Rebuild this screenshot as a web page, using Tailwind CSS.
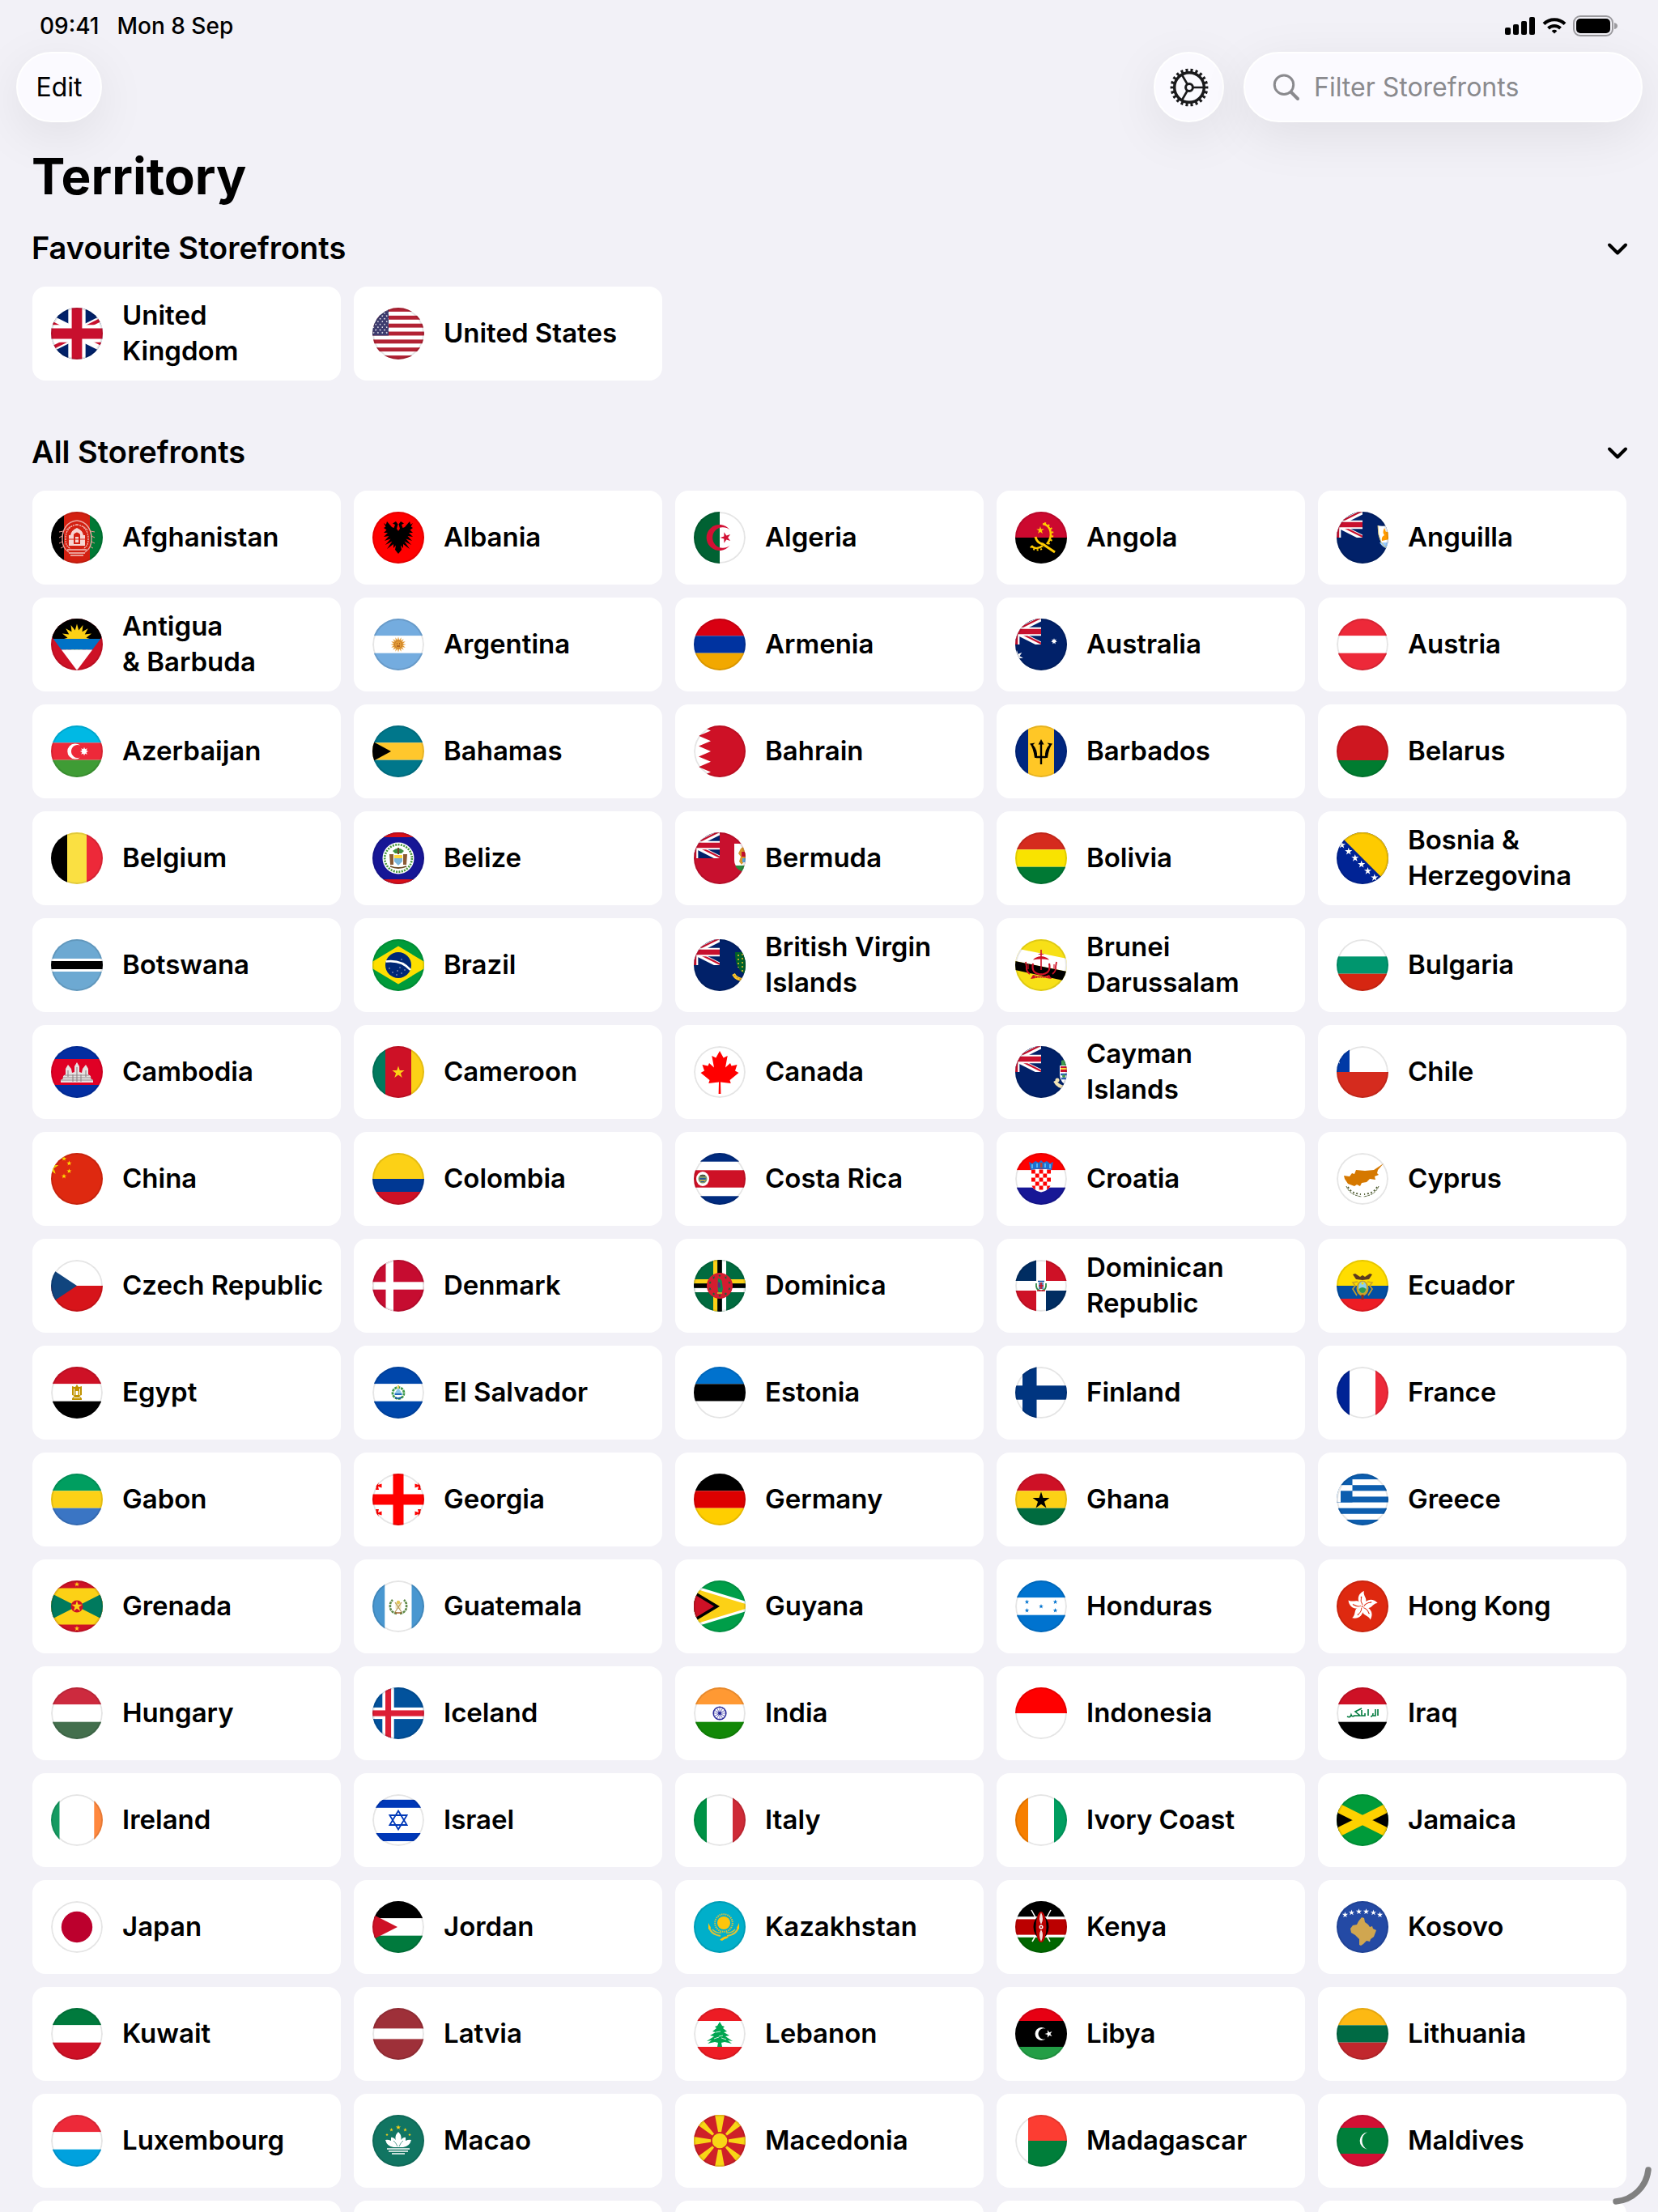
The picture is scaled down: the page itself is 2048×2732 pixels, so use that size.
<!DOCTYPE html>
<html lang="en">
<head>
<meta charset="utf-8">
<meta name="viewport" content="width=device-width, initial-scale=1">
<title>Territory</title>
<script src="https://cdn.jsdelivr.net/npm/@tailwindcss/browser@4"></script>
</head>
<body class="relative h-screen overflow-hidden bg-[#f2f1f7] font-['Inter','Liberation_Sans',sans-serif] text-black">

<!-- Status bar -->
<div class="flex h-16 items-center justify-between pr-[50px] pl-[49px] text-[28px] font-medium">
  <div class="flex gap-[22px]"><time>09:41</time><span>Mon 8 Sep</span></div>
  <div class="flex items-center gap-2">
    <svg class="h-6 w-[38px]" viewBox="0 0 38 24" aria-label="Signal"><rect y="14" width="7" height="9" rx="2"/><rect x="10" y="10" width="7" height="13" rx="2"/><rect x="20" y="6" width="7" height="17" rx="2"/><rect x="30" y="1" width="7" height="22" rx="2"/></svg>
    <svg class="h-6 w-[30px]" viewBox="0 0 30 24" fill="none" stroke="#000" stroke-width="4" aria-label="Wi-Fi"><path d="M2 9.500a18.500 18.500 0 0 1 26 0M7.500 15a10.800 10.800 0 0 1 15 0"/><path d="M15 21.500l-3.300-3.300a4.700 4.700 0 0 1 6.600 0z" fill="#000" stroke="none"/></svg>
    <svg class="h-[26px] w-[55px]" viewBox="0 0 55 26" aria-label="Battery"><rect x="1" y="1" width="48" height="24" rx="8" fill="none" stroke="#9b9a9e" stroke-width="2"/><rect x="4" y="4" width="42" height="18" rx="5"/><path d="M51 9q4 1 4 4t-4 4z" fill="#9b9a9e"/></svg>
  </div>
</div>

<!-- Toolbar -->
<header class="flex items-center gap-6 pr-[19px] pl-5">
  <button type="button" class="h-[87px] w-[106px] rounded-full border-2 border-white bg-[#fbfaff] text-[32px] shadow-[0_16px_64px_rgba(0,0,0,0.08)]">Edit</button>
  <button type="button" aria-label="Settings" class="ml-auto grid size-[87px] place-items-center rounded-full border-2 border-white bg-[#fbfaff] shadow-[0_16px_64px_rgba(0,0,0,0.08)]">
    <svg class="size-12" viewBox="0 0 48 48" fill="none" stroke="#1a1a1c" stroke-width="3">
      <circle cx="24" cy="24" r="18.300" stroke-width="3.500"/>
      <circle cx="24" cy="24" r="21.200" stroke-width="4.400" pathLength="44" stroke-dasharray="1 1" stroke-dashoffset=".5"/>
      <circle cx="24" cy="24" r="4.400"/>
      <path d="M28.500 24H42M21.700 20 15 8.500M21.700 28 15 39.500" stroke-width="2.600"/>
    </svg>
  </button>
  <label class="flex h-[87px] w-[493px] items-center gap-4 rounded-full border-2 border-white bg-[#fbfaff] px-[33px] shadow-[0_16px_64px_rgba(0,0,0,0.08)]">
    <svg class="size-9 shrink-0" viewBox="0 0 36 36" fill="none" stroke="#8a8a8e" stroke-linecap="round" aria-hidden="true"><circle cx="15" cy="14.700" r="11.700" stroke-width="3"/><path d="M24 24l8 8" stroke-width="4"/></svg>
    <input type="text" aria-label="Filter Storefronts" placeholder="Filter Storefronts" class="min-w-0 flex-1 bg-transparent text-[32px] outline-none placeholder:text-[#8a8a8e]">
  </label>
</header>

<main>
  <h1 class="mt-[31px] mb-7 pl-[39px] text-[62px] leading-[72px] font-bold">Territory</h1>

  <section class="mb-16">
    <h2 class="mb-6"><button type="button" aria-expanded="true" class="flex h-12 w-full items-center justify-between pr-9 pl-[39px] text-[38px] leading-[48px] font-semibold">Favourite Storefronts
      <svg class="size-7" viewBox="0 0 28 28" fill="none" stroke="#000" stroke-width="4" stroke-linecap="round" stroke-linejoin="round" aria-hidden="true"><path d="M4 10.500l10 10 10-10"/></svg></button></h2>
    <div id="favourites" class="grid grid-cols-5 gap-4 pr-[39px] pl-10"></div>
  </section>

  <section>
    <h2 class="mb-6"><button type="button" aria-expanded="true" class="flex h-12 w-full items-center justify-between pr-9 pl-[39px] text-[38px] leading-[48px] font-semibold">All Storefronts
      <svg class="size-7" viewBox="0 0 28 28" fill="none" stroke="#000" stroke-width="4" stroke-linecap="round" stroke-linejoin="round" aria-hidden="true"><path d="M4 10.500l10 10 10-10"/></svg></button></h2>
    <div id="storefronts" class="grid grid-cols-5 gap-4 pr-[39px] pl-10"></div>
  </section>
</main>

<!-- Window resize handle -->
<svg class="absolute right-0 bottom-0 size-14" viewBox="0 0 56 56" fill="none" stroke="#808080" stroke-width="7.500" stroke-linecap="round" aria-hidden="true"><path d="M4 43A44 44 0 0 0 44 4"/></svg>

<!-- Shared clip for the red saltire of the Union flag -->
<svg width="0" height="0" class="absolute" aria-hidden="true"><clipPath id="saltire"><path d="M30 15h30v15zv15H0zH0V0zV0h30z"/></clipPath></svg>

<script>
// Drawing helpers: every flag lives in a 64 x 64 box.
const R = (x, y, w, h, f) => `<rect x="${x}" y="${y}" width="${w}" height="${h}" fill="${f}"/>`;
const C = (x, y, r, f) => `<circle cx="${x}" cy="${y}" r="${r}" fill="${f}"/>`;
const P = (d, f) => `<path d="${d}" fill="${f}"/>`;
const L = (d, s, w, x = '') => `<path d="${d}" fill="none" stroke="${s}" stroke-width="${w}" ${x}/>`;
const O = (x, y, r, s, w, x2 = '') => `<circle cx="${x}" cy="${y}" r="${r}" fill="none" stroke="${s}" stroke-width="${w}" ${x2}/>`;
const H = (a, b, c, t = 21.33) => R(0, 0, 64, t, a) + R(0, t, 64, 64 - 2 * t, b) + R(0, 64 - t, 64, t, c);
const V = (a, b, c, t = 16) => R(0, 0, t, 64, a) + R(t, 0, 64 - 2 * t, 64, b) + R(64 - t, 0, t, 64, c);
const S = (x, y, r, f, n = 5, k = 0.382, rot = 0) => {
  let d = '';
  for (let i = 0; i < 2 * n; i++) {
    const a = (i * Math.PI) / n - Math.PI / 2 + (rot * Math.PI) / 180, q = i % 2 ? r * k : r;
    d += (i ? 'L' : 'M') + (x + q * Math.cos(a)).toFixed(2) + ' ' + (y + q * Math.sin(a)).toFixed(2);
  }
  return P(d + 'Z', f);
};
const moon = (x, y, h, o, i, f) => P(`M${x} ${y - h}A${o} ${o} 0 1 0 ${x} ${y + h}A${i} ${i} 0 1 1 ${x} ${y - h}Z`, f);
const mirror = s => s + `<g transform="translate(64) scale(-1 1)">${s}</g>`;
const spin = (s, n) => Array.from({ length: n }, (_, i) => `<g transform="rotate(${(360 / n) * i} 32 32)">${s}</g>`).join('');
const UK = (x, y, w, h) => `<svg x="${x}" y="${y}" width="${w}" height="${h}" viewBox="0 0 60 30">` + R(0, 0, 60, 30, '#012169')
  + L('M0 0l60 30M60 0L0 30', '#fff', 6) + L('M0 0l60 30M60 0L0 30', '#c8102e', 4, 'clip-path="url(#saltire)"')
  + L('M30 0v30M0 15h60', '#fff', 10) + L('M30 0v30M0 15h60', '#c8102e', 6) + '</svg>';
const ensign = (bg, x) => R(0, 0, 64, 64, bg) + UK(-32, 0, 64, 32) + x;

const usStars = () => {
  let s = '';
  for (let r = 0; r < 9; r++) for (let c = 0; c < 4; c++) s += S(1.5 + c * 5.4 + (r % 2 ? 2.7 : 0), 3.4 + r * 3.45, 1.4, '#fff');
  return s;
};
const checks = () => {
  let s = '';
  for (let r = 0; r < 5; r++) for (let c = 0; c < 5; c++) if ((r + c) % 2 === 0) s += R(20 + c * 4.8, 20.5 + r * 5, 4.8, 5, '#f00');
  return s;
};

const favourites = [
  ['United\nKingdom', UK(-32, 0, 128, 64)],
  ['United States', R(0, 0, 64, 64, '#fff') + [0, 1, 2, 3, 4, 5, 6].map(i => R(0, i * 9.846, 64, 4.923, '#b22234')).join('') + `<svg width="20" height="34.500">${R(0, 0, 20, 35, '#3c3b6e')}${usStars()}</svg>`],
];

const storefronts = [
  ['Afghanistan', V('#000', '#d32011', '#007a36') + mirror(L('M32 11C44 12 50 22 50 33S46 47 42 50', '#eda9a2', 1.4) + L('M32 16C41 17 46 24 46 33S44 42 40 46', '#f3c4bf', 1.3, 'stroke-dasharray="2 1"') + L('M49 24l5 1M50 30l4 2M50 37l4 2M48 43l4 2M24 18l-6 5', '#e79b93', 1) + P('M32 20q7 3 8 9h2v13H32z', '#f6d5d1') + L('M22 51h10M24 54h8M20 47h12', '#f3c4bf', 1.6)) + P('M28 28q4-5 8 0v12h-8z', '#d32011') + R(30, 31, 4, 7, '#f6d5d1') + L('M22 34h20', '#d32011', 1)],
  ['Albania', R(0, 0, 64, 64, '#f00') + mirror(P('M31.900 24L34 21 32.500 15.500 35 12 39 14.500 36 16 37.500 20 40 19 46 12 47.200 16 50 14 47.500 18.500 50 20 46.500 22.500 50 26 45 26 50 31 43.500 30 49 36 41.500 33.500 48 41 39.500 36.500 46 46 38 40 38 45 35 41.500 36 47 32 52z', '#000'))],
  ['Algeria', R(0, 0, 32, 64, '#006233') + R(32, 0, 32, 64, '#fff') + moon(44.5, 32, 9.5, 16, 12.8, '#d21034') + S(39.5, 32, 7, '#d21034', 5, 0.382, -90)],
  ['Angola', R(0, 0, 64, 32, '#cc092f') + R(0, 32, 64, 32, '#000') + S(31, 23, 5, '#ffcb00') + L('M34 15C45 17 47 31 39 40', '#ffcb00', 2.6) + L('M36 14C48 18 49 32 41 40', '#ffcb00', 2.5, 'stroke-dasharray="2 3"') + L('M20 42c4 5 10 3 14 0', '#ffcb00', 2.6) + L('M19 43c3 5 12 6 16 1', '#ffcb00', 2, 'stroke-dasharray="2 2.500"') + L('M25 31q2 8 9 9l15 10', '#ffcb00', 3)],
  ['Anguilla', ensign('#012169', P('M51 17q6 2 15-1v31Q51 42 51 17z', '#fff') + P('M53 38h13v9q-9-2-13-9z', '#9cf') + P('M59 20l2 5 4-1v10l-9 2q-1-5 3-7-3-3 0-9z', '#ff9a00') + L('M51 17q0 25 15 30', '#d9c878', 1))],

  ['Antigua\n& Barbuda', R(0, 0, 64, 64, '#ce1126') + P('M-16 0h96L61.200 25H2.800z', '#000') + S(32, 26, 19.5, '#fcd116', 16, 0.6) + P('M2.800 25h58.400l-10.100 13.500H12.900z', '#0072c6') + P('M12.900 38.500h38.200L32 64z', '#fff')],
  ['Argentina', H('#74acdf', '#fff', '#74acdf') + S(32, 32, 9.5, '#e39a35', 16, 0.6) + O(32, 32, 4.5, '#c5812c', 1.2) + L('M30 31h1M33 31h1M30 34h4', '#85340a', 1)],
  ['Armenia', H('#d90012', '#0033a0', '#f2a800')],
  ['Australia', ensign('#012169', S(48, 28, 3.8, '#fff', 7, 0.5) + S(2, 47, 8, '#fff', 7, 0.45))],
  ['Austria', H('#ed2939', '#fff', '#ed2939')],

  ['Azerbaijan', H('#00b9e4', '#ed2939', '#3f9c35') + moon(36, 32, 7.4, 9.6, 8, '#fff') + S(41, 32, 5.2, '#fff', 8, 0.55)],
  ['Bahamas', H('#00778b', '#ffc72c', '#00778b') + P('M-2 18.500L23 32-2 45.500z', '#000')],
  ['Bahrain', R(0, 0, 64, 64, '#fff') + P('M6 0l15 6.400L6 12.800l15 6.400L6 25.600 21 32 6 38.400l15 6.400L6 51.200l15 6.400L6 64h58V0z', '#ce1126')],
  ['Barbados', V('#00267f', '#ffc726', '#00267f') + P('M32 17l3.500 6.500h-7z', '#000') + L('M32 20v28M26 39h12', '#000', 2.4) + mirror(P('M39.500 21.500L46 22.500q-4 4-6 17.500h-3q-1-10 5-16z', '#000'))],
  ['Belarus', R(0, 0, 64, 43, '#ce1720') + R(0, 43, 64, 21, '#007c30')],

  ['Belgium', V('#000', '#fae042', '#ed2939', 20)],
  ['Belize', R(0, 0, 64, 64, '#171696') + R(0, 0, 64, 6, '#d90f19') + R(0, 58, 64, 6, '#d90f19') + C(32, 32, 19.5, '#fff') + O(32, 32, 16.8, '#4a9a3a', 2.6, 'stroke-dasharray="2 1.400"') + P('M25 23q7-7 14 0l-3 3h-8z', '#3f8f3f') + P('M21 27h5v13h-4zM38 27h5l-1 13h-4z', '#8a5a34') + P('M27 28h10v8l-5 5-5-5z', '#7ab6dc') + P('M27 28h10v4H27z', '#ffd83c') + L('M22 42q10 4 20 0', '#6b4a25', 1.8) + R(31, 19, 2, 8, '#6b4a25')],
  ['Bermuda', ensign('#c8102e', P('M50 14h16v36q-16-4-16-16z', '#fff') + P('M51 41h15v9q-12-2-15-9z', '#2b8a3e') + P('M58 20l3-2 3 4v12l-5 6-3-4 2-6-3-4z', '#d9962b') + R(59, 24, 5, 6, '#c8102e') + R(60, 32, 4, 5, '#5aa3d8'))],
  ['Bolivia', H('#d52b1e', '#f9e300', '#007934')],
  ['Bosnia &\nHerzegovina', R(0, 0, 64, 64, '#002395') + P('M0 0h64v64z', '#fecb00') + [[6.5, 15.7], [14.8, 23.6], [22.8, 31.8], [30.7, 39.6], [38.5, 47.8], [46.8, 56]].map(p => S(p[0], p[1], 4.8, '#fff')).join('')],

  ['Botswana', R(0, 0, 64, 64, '#6da9d2') + R(0, 24, 64, 16, '#fff') + R(0, 27, 64, 10, '#000')],
  ['Brazil', R(0, 0, 64, 64, '#009b3a') + P('M-7 32L32 8.500 71 32 32 55.500z', '#fedf00') + C(32, 32, 16, '#002776') + L('M16.500 27.500Q36 25 47 38', '#fff', 2.6) + [[21, 36], [25, 41], [31, 39], [36, 42], [30, 44], [40, 38], [34, 35], [36, 25]].map(p => C(p[0], p[1], 0.7, '#cdd6ea')).join('')],
  ['British Virgin\nIslands', ensign('#012169', P('M51 16h15v28Q51 40 51 16z', '#006129') + L('M55 19v16M60 18v22', '#ffc72c', 1.4, 'stroke-dasharray="2 3"') + L('M49 43q4 8 16 7', '#ffc72c', 4) + L('M50 44q4 6 14 6', '#a8741a', 1, 'stroke-dasharray="2 2"'))],
  ['Brunei\nDarussalam', R(0, 0, 64, 64, '#f7e017') + P('M0 11l64 13v16L0 27z', '#fff') + P('M0 27l64 13v12L0 38z', '#000') + L('M32 13v25', '#cf1126', 1.6) + P('M22 25.500q3-4 10-4.500 7 .5 10 4.500-10-2-20 0z', '#cf1126') + P('M28 19q4-3 8 0z', '#cf1126') + mirror(L('M42 30Q45 43 31 43.500', '#cf1126', 2.2) + L('M51 28l-1 6q1 5-4 9', '#cf1126', 1.8) + L('M48 31v6', '#cf1126', 1.2)) + P('M22 44q10 4 20 0l3 5q-13-3-26 0z', '#cf1126') + L('M24 46.500q8 2 16 0', '#f7e017', 0.8, 'stroke-dasharray="2 1"')],
  ['Bulgaria', H('#fff', '#00966e', '#d62612')],

  ['Cambodia', H('#032ea1', '#e00025', '#032ea1', 16) + P('M32 20l3 5v7l3 1 1-5 4-5 3 5v7l3 2v3l3 2v3H12v-3l3-2v-3l3-2v-7l3-5 4 5 1 5 3-1v-7z', '#e6e2e2') + L('M17 36h30M14 39h36M12 42h40', '#8c8284', 0.9) + L('M32 26v18M21 30v8M43 30v8M27 35v9M37 35v9', '#8c8284', 1.1)],
  ['Cameroon', V('#007a5e', '#ce1126', '#fcd116') + S(32, 32.5, 8, '#fcd116')],
  ['Canada', R(0, 0, 64, 64, '#fff') + P('M32 6l-4.700 8.500-5-2.500L25 26.500 19 21l-1.500 3.500-7-1.500 2.500 7.500L8.500 33l11 9-1.200 4L31 44.500 30.600 59h2.800L33 44.500 45.700 46l-1.200-4 11-9-4.500-2.500 2.500-7.500-7 1.500L45 21l-6 5.500L41.700 12l-5 2.500z', '#f00')],
  ['Cayman\nIslands', ensign('#012169', P('M57 18l6-2v10h-6z', '#3f9c4f') + P('M55 24h11v26q-10-4-11-14z', '#fff') + P('M56 25h9v7h-9z', '#c8102e') + L('M56 28h9', '#ffd83c', 2) + L('M56 35h9M57 40h8', '#2f5fb8', 2.4) + C(60, 37, 2, '#3f9c4f') + L('M49 43q4 8 14 8', '#f2e3b5', 4) + C(52, 42, 2.5, '#f2e3b5'))],
  ['Chile', R(0, 0, 64, 32, '#fff') + R(0, 0, 16, 32, '#0039a6') + R(0, 32, 64, 32, '#d52b1e') + S(0, 16, 7, '#fff')],

  ['China', R(0, 0, 64, 64, '#de2910') + S(0, 18, 9.6, '#ffde00') + [[16, 7], [22.4, 12.8], [22.4, 22.4], [16, 28.8]].map(p => S(p[0], p[1], 3.2, '#ffde00')).join('')],
  ['Colombia', R(0, 0, 64, 32, '#fcd116') + R(0, 32, 64, 16, '#003893') + R(0, 48, 64, 16, '#ce1126')],
  ['Costa Rica', R(0, 0, 64, 64, '#fff') + R(0, 0, 64, 10.7, '#002b7f') + R(0, 53.3, 64, 10.7, '#002b7f') + R(0, 21.3, 64, 21.4, '#ce1126') + '<ellipse cx="11" cy="32" rx="8" ry="9" fill="#fff"/>' + C(11, 32, 5.5, '#7d9a6a') + P('M7 31h8l-2 5H9z', '#24599b') + L('M8 28h6', '#3f3f3f', 1.4) + R(8, 33, 6, 1.6, '#e0b83a')],
  ['Croatia', H('#f00', '#fff', '#171796') + `<svg width="64" height="64"><clipPath id="hr"><path d="M20 20h24v17q0 9-12 11.500Q20 46 20 37z"/></clipPath><g clip-path="url(#hr)">${R(20, 20, 24, 30, '#fff')}${checks()}</g></svg>` + P('M17 11l4 2 4-3 4 2 3-3 3 3 4-2 4 3 4-2-2 10q-13-3-26 0z', '#1f6fd0') + L('M21 14v5M27 13v5M37 13v5M43 14v5', '#56b4f0', 2) + R(31, 12, 2.5, 6, '#c8402c')],
  ['Cyprus', R(0, 0, 64, 64, '#fff') + P('M58 13l-7 8-1 4 2 2-5 2 1 4-7-1-4 4-6 1-2 4-4-2-3 2-8-3-4-6-1-4 7 1 3-4 3 1 2-5 11 1 11-1z', '#d57800') + mirror(L('M52 41q-4 11-19 13', '#4e5b31', 1, 'stroke-dasharray="3 1"') + L('M50 42q-4 8-16 9', '#4e5b31', 1.8, 'stroke-dasharray="2 2.500"'))],

  ['Czech Republic', R(0, 0, 64, 32, '#fff') + R(0, 32, 64, 32, '#d7141a') + P('M-16 0l48 32-48 32z', '#11457e')],
  ['Denmark', R(0, 0, 64, 64, '#c60c30') + R(16.5, 0, 9.5, 64, '#fff') + R(0, 27.3, 64, 9.4, '#fff')],
  ['Dominica', R(0, 0, 64, 64, '#006b3f') + R(24, 0, 5.3, 64, '#fcd116') + R(34.7, 0, 5.3, 64, '#fff') + R(0, 24, 64, 5.3, '#fcd116') + R(0, 34.7, 64, 5.3, '#fff') + R(29.3, 0, 5.4, 64, '#000') + R(0, 29.3, 64, 5.4, '#000') + C(32, 32, 16, '#d41c30') + spin(S(32, 19.5, 2, '#006b3f'), 10) + P('M30 23q5 0 5 6l1 7-2 6-4-3q-1-9 0-16z', '#108c4f') + P('M30 27l3 2v6l-3-1z', '#5b2d82') + R(29, 40, 6, 2, '#c9a227')],
  ['Dominican\nRepublic', R(0, 0, 64, 64, '#fff') + R(0, 0, 26, 26, '#002d62') + R(38, 0, 26, 26, '#ce1126') + R(0, 38, 26, 26, '#ce1126') + R(38, 38, 26, 26, '#002d62') + mirror(L('M33 38q6-1 5-9', '#2c8745', 1.8)) + R(29, 28, 6, 8, '#5b7fae') + L('M29 32h6M32 28v8', '#ce1126', 1.6) + L('M27 38h10', '#ce1126', 1.6) + L('M28 26.500h8', '#0a4b9c', 1.4)],
  ['Ecuador', R(0, 0, 64, 32, '#ffdd00') + R(0, 32, 64, 16, '#034ea2') + R(0, 48, 64, 16, '#ed1c24') + mirror(P('M32 19l3 2 6-4 3 1-4 6-8 1z', '#5c3a1e') + L('M38 27l6 1-3 4 3 4-5 8', '#c9a227', 1.6)) + '<ellipse cx="32" cy="35" rx="7.500" ry="9.500" fill="#c9a227"/><ellipse cx="32" cy="34" rx="5" ry="7" fill="#8bd0ec"/>' + P('M27.500 36q4.500-4 9 0-1 5-4.500 5t-4.500-5z', '#2f9a4f') + C(32, 29, 1.5, '#ffdd00') + R(30.5, 43, 3, 6, '#8c2f22')],

  ['Egypt', H('#ce1126', '#fff', '#000') + P('M32 22l2 3h1l3-1v11l-3 1 3 3v2h-12v-2l3-3-3-1V24l3 1h1z', '#c09300') + P('M30.500 30h3v5h-3z', '#fff') + L('M28.500 27v8M35.500 27v8M28 38.500h8', '#fff', 0.9)],
  ['El Salvador', H('#0047ab', '#fff', '#0047ab') + O(32, 32.5, 7, '#3f9a4a', 2.8, 'stroke-dasharray="3 1"') + P('M32 26l6 9h-12z', '#8fc6e8') + L('M28 34h8', '#0047ab', 1.6) + L('M28 38q4 2 8 0', '#0047ab', 1.6) + R(31, 23, 2, 4, '#e6c84a')],
  ['Estonia', H('#0072ce', '#000', '#fff')],
  ['Finland', R(0, 0, 64, 64, '#fff') + R(9, 0, 17.5, 64, '#003580') + R(0, 23.3, 64, 17.4, '#003580')],
  ['France', V('#002395', '#fff', '#ed2939')],

  ['Gabon', H('#009e60', '#fcd116', '#3a75c4')],
  ['Georgia', R(0, 0, 64, 64, '#fff') + R(25.5, 0, 13, 64, '#f00') + R(0, 25.5, 64, 13, '#f00') + mirror([15, 49].map(y => P(`M4 ${y - 5}h4l-1 4 4.500-1.500v5l-4.500-1.500 1 4H4l1-4-4 1v-4l4 1z`, '#f00')).join(''))],
  ['Germany', H('#000', '#dd0000', '#ffce00')],
  ['Ghana', H('#ce1126', '#fcd116', '#006b3f') + S(32, 33.5, 11, '#000')],
  ['Greece', R(0, 0, 64, 64, '#fff') + [0, 1, 2, 3, 4].map(i => R(0, i * 14.22, 64, 7.11, '#0d5eaf')).join('') + R(0, 0, 19.5, 35.5, '#0d5eaf') + R(0, 14.2, 19.5, 7.1, '#fff') + R(-2, 0, 7, 35.5, '#fff')],

  ['Grenada', R(0, 0, 64, 64, '#ce1126') + R(0, 9.5, 64, 45, '#fcd116') + P('M-12 9.500L32 32-12 54.500zM76 9.500L32 32l44 22.500z', '#007a5e') + C(32, 32, 7.5, '#ce1126') + S(32, 32, 7, '#fcd116') + S(32, 4.8, 3.4, '#fcd116') + S(32, 59.4, 3.4, '#fcd116')],
  ['Guatemala', V('#4997d0', '#fff', '#4997d0', 15.5) + mirror(L('M34 41q9-2 8-11 0-3-3-6', '#5f8a48', 2.6, 'stroke-dasharray="3 1"')) + R(28.5, 27, 7, 8, '#f1e7c4') + L('M28 39l8-12M36 39l-8-12', '#b79a5a', 1.2) + C(32, 27, 2.2, '#e5c75a') + L('M28 40h8', '#a5602f', 1.4)],
  ['Guyana', R(0, 0, 64, 64, '#009e49') + P('M-21 0L85 32-21 64z', '#fff') + P('M-21 3.500L74 32-21 60.500z', '#fcd116') + P('M-21 0l53 32-53 32z', '#000') + P('M-21 4l46 28-46 28z', '#ce1126')],
  ['Honduras', H('#0073cf', '#fff', '#0073cf') + [[14.5, 26.5], [14.5, 37], [32, 32], [49.5, 26.5], [49.5, 37]].map(p => S(p[0], p[1], 3, '#0073cf')).join('')],
  ['Hong Kong', R(0, 0, 64, 64, '#de2910') + spin(P('M32 31.500C25.500 28 24 17 34 13c-2 5 4 9 2 13.500-1 2.500-3 4-4 5z', '#fff') + L('M32 30q-3-4-1.500-9', '#de2910', 1) + S(30.5, 20.5, 1.3, '#de2910'), 5)],

  ['Hungary', H('#cd2a3e', '#fff', '#436f4d')],
  ['Iceland', R(0, 0, 64, 64, '#02529c') + R(12.3, 0, 14.4, 64, '#fff') + R(0, 24.9, 64, 14.2, '#fff') + R(16, 0, 7.1, 64, '#dc1e35') + R(0, 28.4, 64, 7.2, '#dc1e35')],
  ['India', H('#ff9933', '#fff', '#128807') + O(32, 32, 7.8, '#2a2a9a', 1.6) + spin(L('M32 32v-7', '#5a5ab4', 0.8), 12) + C(32, 32, 2, '#2a2a9a')],
  ['Indonesia', R(0, 0, 64, 32, '#f00') + R(0, 32, 64, 32, '#fff')],
  ['Iraq', H('#ce1126', '#fff', '#000') + L('M13 36q4 2 5-2 1 3 4 1h7l-6-5 8-4M31 28v7h4v-3', '#007a3d', 1.6) + L('M39 35v-8M42 36q3 0 3-4M45 35h3v-8M51 35v-8', '#007a3d', 1.6)],

  ['Ireland', V('#169b62', '#fff', '#ff883e', 10.7)],
  ['Israel', R(0, 0, 64, 64, '#fff') + R(0, 6.8, 64, 10, '#0038b8') + R(0, 48, 64, 10, '#0038b8') + L('M32 20.500l10.600 17.500H21.400zM32 43.500L21.400 26h21.200z', '#0038b8', 1.8)],
  ['Italy', V('#009246', '#fff', '#ce2b37')],
  ['Ivory Coast', V('#f77f00', '#fff', '#009e60')],
  ['Jamaica', R(0, 0, 64, 64, '#009b3a') + P('M-32 0l64 32-64 32zM96 0L32 32l64 32z', '#000') + L('M-32 0L96 64M96 0L-32 64', '#fed100', 11.4)],

  ['Japan', R(0, 0, 64, 64, '#fff') + C(32, 32, 19.2, '#bc002d')],
  ['Jordan', H('#000', '#fff', '#007a3d') + P('M-32 0l63 32-63 32z', '#ce1126')],
  ['Kazakhstan', R(0, 0, 64, 64, '#00afca') + C(37, 27, 8, '#fec50c') + O(37, 27, 10.8, '#d9c23a', 2, 'stroke-dasharray="1.500 1"') + L('M19 31q1 10 14 12M55 31q-1 10-14 12', '#d9c23a', 2.2) + L('M23 35q5 5 11 4M51 35q-5 5-11 4', '#d9c23a', 1.4) + P('M32 48q6-6 11-4-2 3-5 3l-3 2z', '#fec50c') + P('M18 27l3 6-3 2zM56 27l-3 6 3 2z', '#fec50c')],
  ['Kenya', R(0, 0, 64, 64, '#fff') + R(0, 0, 64, 19.2, '#000') + R(0, 22.4, 64, 19.2, '#bb0000') + R(0, 44.8, 64, 19.2, '#006600') + L('M20 11l5 9 18 30M44 11l-5 9-18 30', '#fff', 1.5) + '<ellipse cx="32" cy="32" rx="9.500" ry="14" fill="#000"/><ellipse cx="32" cy="32" rx="6.500" ry="19" fill="#bb0000"/>' + P('M32 14q4 8 0 15-4-7 0-15zM32 50q4-8 0-15-4 7 0 15z', '#f3dcdc') + O(32, 32, 1.8, '#fff', 1.4)],
  ['Kosovo', R(0, 0, 64, 64, '#244aa5') + [[10.5, 17], [18.5, 14.3], [27.5, 13], [36.5, 13], [45.5, 14.3], [53.5, 17]].map(p => S(p[0], p[1], 3.8, '#fff')).join('') + P('M31 20l3 1 1 5 4 3 2 3 3-1 1 3 4 2-3 8-4 3-1 3-4-1-4 4-3 2-2-1v-7l-5-5-5-3-1-5 3-4 5-1 2-4z', '#d0a650')],

  ['Kuwait', H('#007a3d', '#fff', '#ce1126')],
  ['Latvia', H('#9e3039', '#fff', '#9e3039', 25.6)],
  ['Lebanon', H('#ed1c24', '#fff', '#ed1c24', 16) + mirror(P('M32 17l3 5 3 1-2 2 5 4-4 1 7 4-5 1 9 6-6-1 5 4-9-2-4 1 1 5h-3z', '#00a651')) + L('M27 30l6-1M36 34l-5 1M25 38l6-2M40 39l-6-2', '#fff', 0.8)],
  ['Libya', R(0, 0, 64, 16, '#e70013') + R(0, 16, 64, 32, '#000') + R(0, 48, 64, 16, '#239e46') + moon(37.5, 32, 6.3, 8, 6.7, '#fff') + S(41.5, 32, 5, '#fff', 5, 0.382, -90)],
  ['Lithuania', H('#fdb913', '#006a44', '#c1272d')],

  ['Luxembourg', H('#ed2939', '#fff', '#00a1de')],
  ['Macao', R(0, 0, 64, 64, '#117562') + [[18, 24.5, 2], [23.5, 18.500, 2.4], [32, 15.5, 3.2], [40.5, 18.500, 2.4], [46, 24.5, 2]].map(p => S(p[0], p[1], p[2], '#fbd116')).join('') + P('M32 21q5 5 3 10 4-4 6-3v4q4-2 7-1-2 8-10 9H26q-8-1-10-9 3-1 7 1v-4q2-1 6 3-2-5 3-10z', '#fff') + mirror(L('M33 39q2-5 5-7', '#117562', 0.7)) + L('M18 42h28M20 45h24M24 48h16', '#fff', 1.4)],
  ['Macedonia', R(0, 0, 64, 64, '#ce2028') + P('M26 0h12l-6 32zM26 64h12l-6-32zM0 27v10l32-5zM64 27v10l-32-5z', '#f8d616') + mirror(P('M32 32L64 9l-6-9zM32 32l32 23-6 9z', '#f8d616')) + C(32, 32, 11, '#ce2028') + C(32, 32, 9.3, '#f8d616')],
  ['Madagascar', R(0, 0, 64, 64, '#fff') + R(16, 0, 48, 32, '#fc3d32') + R(16, 32, 48, 32, '#007e3a')],
  ['Maldives', H('#d21034', '#007e3a', '#d21034', 16) + P('M38 21.300A10.800 10.800 0 0 0 38 42.700A12 12 0 0 1 38 21.300z', '#fff')],

  // The next row is only just in view under the fold.
  ['', ''], ['', ''], ['', ''], ['', ''], ['', ''],
];

const card = ([name, flag]) => `<a href="#" class="flex h-[116px] items-center gap-6 rounded-2xl bg-white pl-[23px]">
  <svg class="size-16 shrink-0 rounded-full" viewBox="0 0 64 64" aria-hidden="true">${flag}${flag && '<circle cx="32" cy="32" r="31" fill="none" stroke="#000" stroke-opacity=".1" stroke-width="2"/>'}</svg>
  <span class="pb-0.5 text-[33px] leading-[44px] font-semibold whitespace-pre">${name.replace('&', '&amp;')}</span></a>`;

document.getElementById('favourites').innerHTML = favourites.map(card).join('');
document.getElementById('storefronts').innerHTML = storefronts.map(card).join('');
</script>
</body>
</html>
